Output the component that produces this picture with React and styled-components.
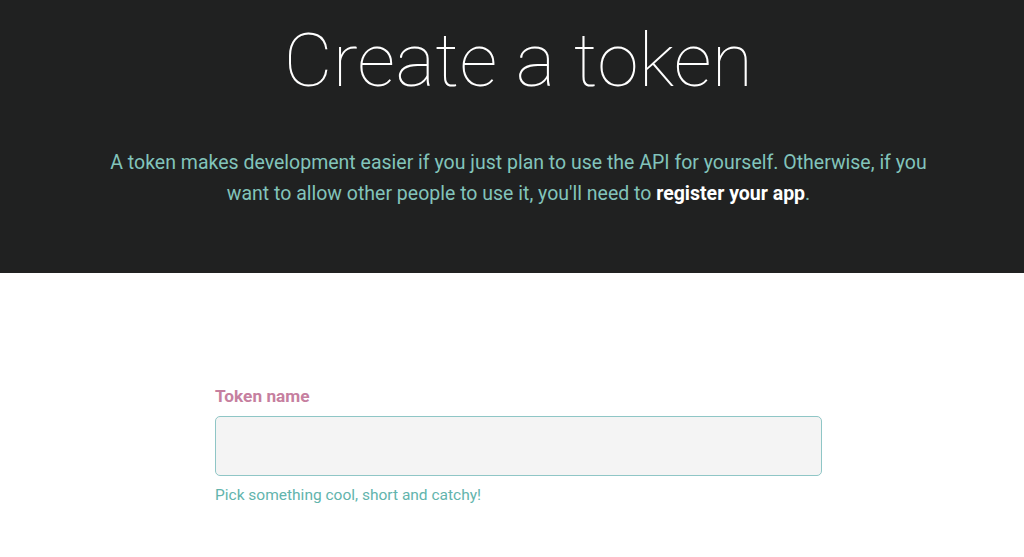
import styled, { createGlobalStyle } from 'styled-components'

const GlobalStyle = createGlobalStyle`
    html, body {
        margin: 0;
        padding: 0;
        background: #ffffff;
        font-family: Roboto, "Liberation Sans", sans-serif;
    }
`

function App() {
    return (
        <Container>
            <GlobalStyle />
            <Hero>
                <Title>Create a token</Title>
                <Intro>
                    A token makes development easier if you just plan to use the API for yourself. Otherwise, if you
                    want to allow other people to use it, you'll need to <Strong>register your app</Strong>.
                </Intro>
            </Hero>
            <Form>
                <Field>
                    <Label htmlFor="token-name">Token name</Label>
                    <Input id="token-name" type="text" />
                    <Hint>Pick something cool, short and catchy!</Hint>
                </Field>
            </Form>
        </Container>
    )
}

export default App

const Container = styled.div`
    min-height: 557px;
`

const Hero = styled.header`
    background: #202121;
    height: 273px;
    box-sizing: border-box;
    display: flex;
    flex-direction: column;
    align-items: center;
    padding: 16px 0 0 13px;
`

const Title = styled.h1`
    margin: 0;
    font-family: Roboto, sans-serif;
    font-weight: 100;
    font-size: 75px;
    line-height: 88px;
    color: #ffffff;
    letter-spacing: 0.3px;
`

const Intro = styled.p`
    margin: 43px 0 0;
    max-width: 830px;
    text-align: center;
    font-size: 19.5px;
    line-height: 31px;
    color: #82c4bb;
`

const Strong = styled.a`
    color: #ffffff;
    font-weight: 700;
`

const Form = styled.main`
    display: flex;
    justify-content: center;
    padding-top: 112px;
`

const Field = styled.div`
    width: 607px;
    display: flex;
    flex-direction: column;
    margin-left: 13px;
`

const Label = styled.label`
    font-size: 17.3px;
    font-weight: 700;
    color: #c67f9f;
    line-height: 22px;
    margin-bottom: 9px;
`

const Input = styled.input`
    box-sizing: border-box;
    height: 60px;
    width: 100%;
    border: 1px solid #8fc6c6;
    border-radius: 5px;
    background: #f4f4f4;
    outline: none;
    font-size: 16px;
    padding: 0 14px;
`

const Hint = styled.span`
    margin-top: 10px;
    font-size: 15.5px;
    line-height: 18px;
    color: #62b4ac;
`
